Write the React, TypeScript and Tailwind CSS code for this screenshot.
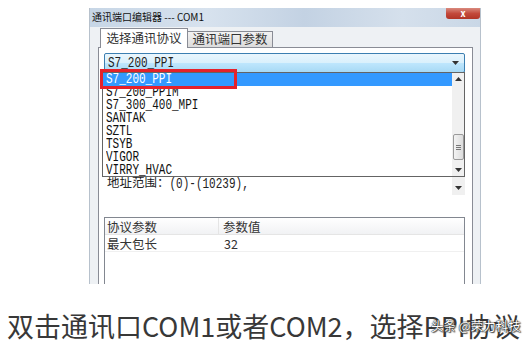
import React from "react";

const items = [
  "S7_200_PPI",
  "S7_200_PPIM",
  "S7_300_400_MPI",
  "SANTAK",
  "SZTL",
  "TSYB",
  "VIGOR",
  "VIRRY_HVAC",
];

const mono = "font-['Liberation_Mono','Noto_Sans_CJK_SC',monospace]";
const tall = "inline-block origin-center scale-y-[1.25]";

const Arrow = ({ up }: { up?: boolean }) => (
  <svg width="7" height="4" viewBox="0 0 7 4" className={up ? "rotate-180" : ""}>
    <path d="M0 0h7L3.5 4z" fill="#333" />
  </svg>
);

const App: React.FC = () => {
  return (
    <div className="relative w-[531px] h-[344px] overflow-hidden bg-white font-['Noto_Sans_CJK_SC',sans-serif]">
      {/* window */}
      <div className="ml-[89px] mt-[8px] w-[392px] h-[276px] flex flex-col overflow-hidden bg-[#eef1f4] border-x border-[#b7c1cc]">
        {/* title bar */}
        <div className="h-[19px] shrink-0 flex items-start bg-[linear-gradient(90deg,#c7d6e6_0%,#d7e2ee_30%,#c3d2e3_55%,#d5e0ec_80%,#c9d7e6_100%)]">
          <span className="pl-[2px] pt-[3px] text-[10px] leading-[12px] text-[#111]">通讯端口编辑器 --- COM1</span>
          <div className="ml-auto w-[34px] h-[11px] rounded-b-[3px] bg-[linear-gradient(180deg,#d98a7e_0%,#c3493b_50%,#b13426_100%)] flex items-center justify-center text-white text-[9px] leading-none font-bold">
            x
          </div>
        </div>

        {/* tabs */}
        <div className="h-[19px] mt-[1px] shrink-0 flex items-end pl-[10px]">
          <div className="relative z-10 -mb-px h-[20px] w-[88px] bg-white border border-b-0 border-[#898c95] flex items-center justify-center text-[12.5px] text-[#333]">
            选择通讯协议
          </div>
          <div className="h-[16px] w-[85px] border border-l-0 border-b-0 border-[#898c95] bg-[linear-gradient(180deg,#f2f2f2,#dcdcdc)] flex items-center justify-center text-[12.5px] text-[#333]">
            通讯端口参数
          </div>
        </div>

        {/* panel */}
        <div className="ml-[8px] mr-[7px] flex-1 min-h-0 flex flex-col bg-white border border-b-0 border-[#898c95] pt-[5px] pl-[5px] pr-[7px]">
          {/* combo with open list */}
          <div className="relative z-20">
            <div className="h-[20px] flex items-center justify-between rounded-[2px] border border-[#3c7fb1] bg-[linear-gradient(180deg,#eaf6fd_0%,#d9f0fc_50%,#bee6fd_51%,#a7d9f5_100%)] pl-[3px] pr-[5px]">
              <span className={`${mono} ${tall} text-[11px] leading-[13px] text-[#222]`}>S7_200_PPI</span>
              <Arrow />
            </div>

            {/* dropdown list */}
            <div className="absolute top-[19px] left-[-2px] w-[363px] h-[105px] flex bg-white border border-[#646464]">
              <div className="flex-1 flex flex-col">
                {items.map((it, i) => (
                  <div
                    key={it}
                    className={`${mono} h-[13px] pl-[3px] text-[11px] leading-[13px] ${
                      i === 0 ? "bg-[#3399ff] text-white" : "text-[#111]"
                    }`}
                  >
                    <span className={tall}>{it}</span>
                  </div>
                ))}
              </div>
              <div className="w-[12px] bg-[#f0f0f0] flex flex-col items-center justify-between py-[4px]">
                <Arrow up />
                <div className="mt-auto mb-[8px] w-[11px] h-[26px] rounded-[2px] border border-[#9a9a9a] bg-[linear-gradient(90deg,#f3f3f3,#dcdcdc)] flex flex-col items-center justify-center gap-[1px]">
                  <div className="w-[5px] h-px bg-[#777]" />
                  <div className="w-[5px] h-px bg-[#777]" />
                  <div className="w-[5px] h-px bg-[#777]" />
                </div>
                <Arrow />
              </div>
            </div>

            {/* red highlight box */}
            <div className="absolute top-[16px] left-[-4px] w-[137px] h-[20px] border-[3px] border-[#e5222b]" />
          </div>

          {/* description text area */}
          <div className="h-[122px] shrink-0 flex">
            <div className="flex-1 flex flex-col justify-end pb-[8px] pl-[3px] text-[#222]">
              <div className="h-[13px] leading-[13px] whitespace-nowrap">
                <span className="text-[12.5px]">地址范围：</span>
                <span className={`${mono} ${tall} text-[11px]`}>(0)-(10239),</span>
              </div>
            </div>
            <div className="w-[13px] bg-[#f0f0f0] flex flex-col items-center justify-end pb-[5px]">
              <Arrow />
            </div>
          </div>

          {/* parameter table */}
          <div className="mt-[22px] flex-1 border border-b-0 border-[#828790] text-[12.5px] text-[#333]">
            <div className="h-[17px] flex items-center border-b border-[#e5e5e5] bg-[linear-gradient(180deg,#ffffff,#f1f2f4)]">
              <div className="w-[114px] pl-[2px] border-r border-[#e5e5e5] leading-[17px]">协议参数</div>
              <div className="pl-[4px] leading-[17px]">参数值</div>
            </div>
            <div className="h-[17px] flex items-center border-b border-[#f0f0f0]">
              <div className="w-[114px] pl-[2px] leading-[17px]">最大包长</div>
              <div className="pl-[5px] leading-[17px]">32</div>
            </div>
          </div>
        </div>
      </div>

      {/* caption */}
      <div className="mt-[27px] pl-[7px] text-[27px] leading-[29px] text-[#383838] whitespace-nowrap">
        双击通讯口COM1或者COM2，选择PPI协议
      </div>
      <div className="absolute left-[431px] top-[318px] text-[12.5px] leading-[15px] text-white [text-shadow:0_0_1px_#222,0_0_1px_#222,0_0_2px_#444,1px_1px_1px_#555] whitespace-nowrap">
        头条 @荣力科技
      </div>
    </div>
  );
};

export default App;
